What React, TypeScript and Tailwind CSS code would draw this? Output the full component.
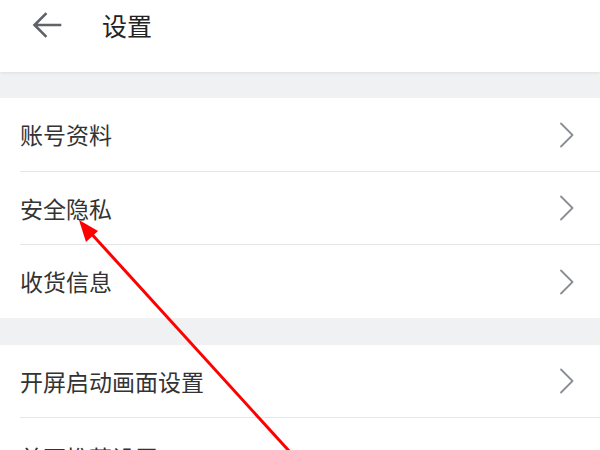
import React from "react";

const Chevron = () => (
  <svg width="16" height="26" viewBox="0 0 16 26" fill="none">
    <path d="M2 1.5 L13.5 13 L2 24.5" stroke="#8a8d93" strokeWidth="1.8" strokeLinecap="round" strokeLinejoin="round" />
  </svg>
);

const Row = ({ label, last, noChevron }: { label: string; last?: boolean; noChevron?: boolean }) => (
  <div className="flex h-[73px] items-stretch bg-white pl-[20px]">
    <div className={`flex flex-1 items-center justify-between pr-[25px] ${last ? "" : "border-b border-[#e6e6e6]"}`}>
      <span className="text-[23px] text-[#333333]">{label}</span>
      {noChevron ? null : <Chevron />}
    </div>
  </div>
);

export default function App() {
  return (
    <div
      className="relative h-[450px] w-[600px] overflow-hidden bg-[#f0f1f3]"
      style={{ fontFamily: '"Noto Sans CJK SC", "Noto Sans", sans-serif' }}
    >
      <div className="flex h-[72px] items-start bg-white pt-[6px] shadow-[0_1px_3px_rgba(0,0,0,0.08)]">
        <div className="flex h-[38px] items-center pl-[32px]">
          <svg width="30" height="26" viewBox="0 0 30 26" fill="none">
            <path d="M28 13 H3 M13.5 2 L2.5 13 L13.5 24" stroke="#5f6267" strokeWidth="2.6" strokeLinecap="square" strokeLinejoin="miter" />
          </svg>
          <span className="ml-[40px] text-[25px] leading-none text-[#222222]">设置</span>
        </div>
      </div>
      <div className="h-[26px]" />
      <div className="h-[74px] bg-white pl-[20px]">
        <div className="flex h-full items-center justify-between border-b border-[#e6e6e6] pr-[25px]">
          <span className="text-[23px] text-[#333333]">账号资料</span>
          <Chevron />
        </div>
      </div>
      <Row label="安全隐私" />
      <Row label="收货信息" last />
      <div className="h-[27px]" />
      <Row label="开屏启动画面设置" />
      <div className="h-[73px] bg-white pl-[20px] pt-[22px]">
        <span className="text-[23px] text-[#333333]">首页推荐设置</span>
      </div>
      <svg className="pointer-events-none absolute left-0 top-0" width="600" height="450" viewBox="0 0 600 450">
        <line x1="290" y1="452" x2="88" y2="230" stroke="#ff0000" strokeWidth="3" />
        <polygon points="79,220 98,231 86,242" fill="#ff0000" />
      </svg>
    </div>
  );
}
